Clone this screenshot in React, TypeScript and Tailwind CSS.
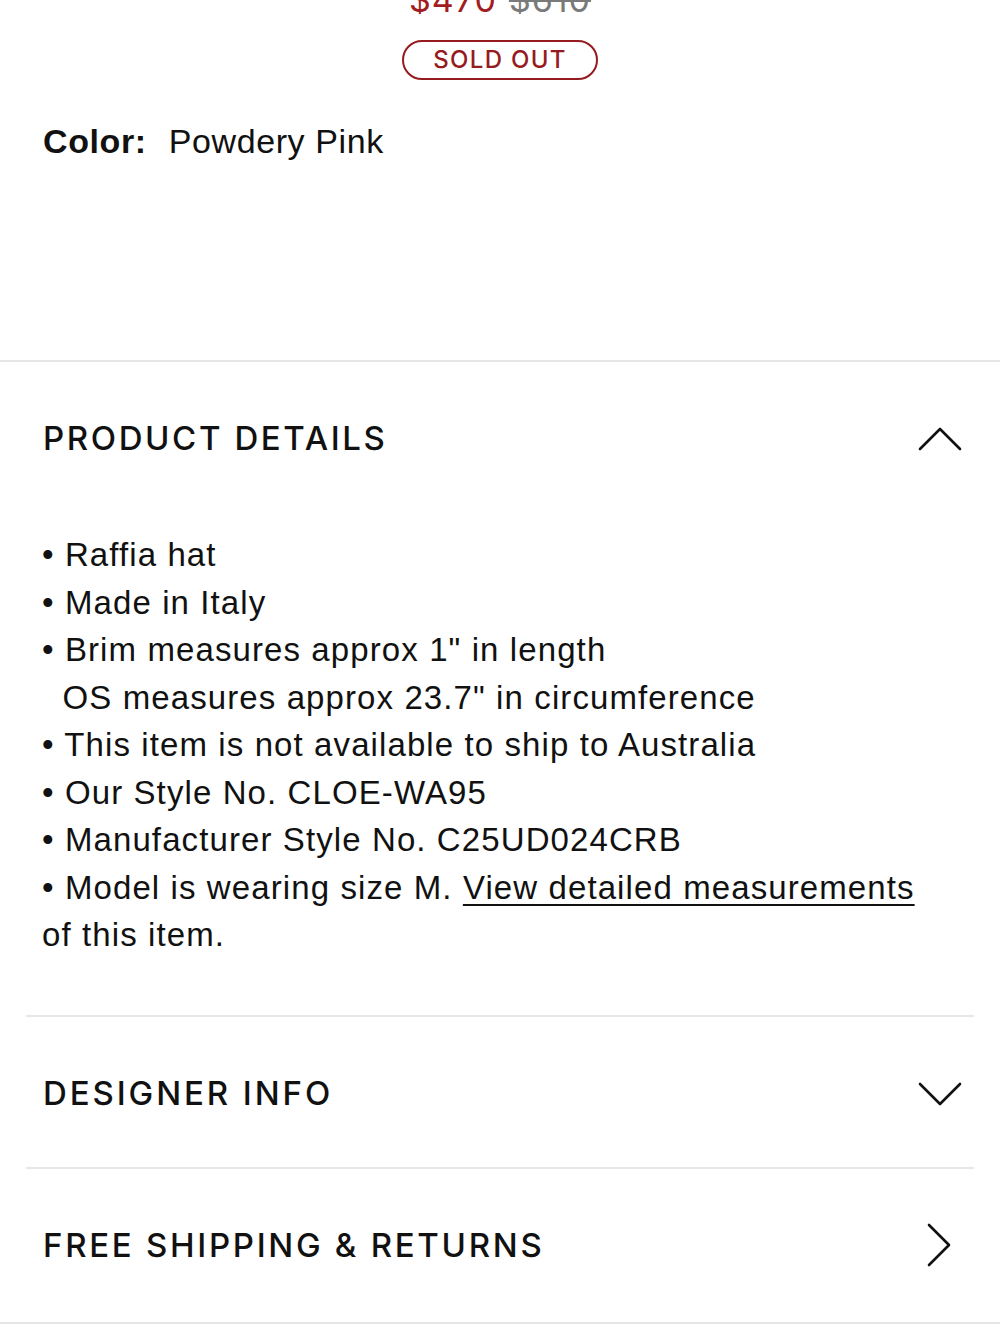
import React from "react";

const body = { fontFamily: '"Liberation Sans", Arial, sans-serif' };
const head = { fontFamily: 'Inter, "DejaVu Sans", sans-serif' };

function ChevronUp() {
  return (
    <svg width="44" height="26" viewBox="0 0 44 26" fill="none">
      <path d="M2 24 L22 4 L42 24" stroke="#111" strokeWidth="2.6" strokeLinecap="round" strokeLinejoin="round" />
    </svg>
  );
}
function ChevronDown() {
  return (
    <svg width="44" height="26" viewBox="0 0 44 26" fill="none">
      <path d="M2 3 L22 23 L42 3" stroke="#111" strokeWidth="2.6" strokeLinecap="round" strokeLinejoin="round" />
    </svg>
  );
}
function ChevronRight() {
  return (
    <svg width="26" height="46" viewBox="0 0 26 46" fill="none">
      <path d="M3 2 L23 22 L3 42" stroke="#111" strokeWidth="2.6" strokeLinecap="round" strokeLinejoin="round" />
    </svg>
  );
}

export default function App() {
  const items: React.ReactNode[] = [
    <>• Raffia hat</>,
    <>• Made in Italy</>,
    <>• Brim measures approx 1" in length</>,
    <>&nbsp;&nbsp;OS measures approx 23.7" in circumference</>,
    <>• This item is not available to ship to Australia</>,
    <>• Our Style No. CLOE-WA95</>,
    <>• Manufacturer Style No. C25UD024CRB</>,
  ];
  return (
    <div className="w-[1000px] h-[1333px] overflow-hidden bg-white text-[#111]">
      {/* price (cut at top edge, as in the reference) */}
      <div className="h-[14px] overflow-hidden flex justify-center">
        <div className="flex gap-[12px] leading-none mt-[-17px] tracking-[1px]" style={head}>
          <span className="text-[#a21d21] text-[34px]">$470</span>
          <span className="text-[#7a7a7a] text-[34px] line-through">$610</span>
        </div>
      </div>
      <div className="flex justify-center mt-[26px]">
        <div
          className="w-[196px] h-[40px] rounded-full border-2 border-[#951b1e] flex items-center justify-center text-[#951b1e] text-[24px] font-medium tracking-[1.3px]"
          style={head}
        >
          SOLD OUT
        </div>
      </div>
      <div className="pl-[43px] mt-[39px] flex items-baseline text-[34px] leading-[44px] tracking-[0.6px]" style={body}>
        <span className="font-bold">Color:</span>
        <span className="ml-[22px]">Powdery Pink</span>
      </div>

      <div className="mt-[197px] h-[2px] bg-[#e6e6e6]" />

      {/* product details */}
      <div className="flex items-center justify-between pl-[43px] pr-[38px] pt-[56px]">
        <span className="text-[33px] font-medium tracking-[2.6px] leading-[40px]" style={head}>PRODUCT DETAILS</span>
        <ChevronUp />
      </div>
      <div className="pl-[42px] pt-[73px] text-[33px] leading-[47.5px] tracking-[1.1px]" style={body}>
        {items.map((it, i) => (
          <div key={i}>{it}</div>
        ))}
        <div>
          • Model is wearing size M. <span className="underline underline-offset-[5px] decoration-2">View detailed measurements</span>
          <br />
          of this item.
        </div>
      </div>

      <div className="mx-[26px] mt-[56px] h-[2px] bg-[#e6e6e6]" />
      <div className="flex items-center justify-between pl-[43px] pr-[38px] pt-[4px] h-[150px]">
        <span className="text-[33px] font-medium tracking-[2.9px]" style={head}>DESIGNER INFO</span>
        <ChevronDown />
      </div>
      <div className="mx-[26px] h-[2px] bg-[#e6e6e6]" />
      <div className="flex items-center justify-between pl-[43px] pr-[48px] pt-[2px] h-[153px]">
        <span className="text-[33px] font-medium tracking-[2.7px]" style={head}>FREE SHIPPING &amp; RETURNS</span>
        <ChevronRight />
      </div>
      <div className="h-[2px] bg-[#e6e6e6]" />
    </div>
  );
}
